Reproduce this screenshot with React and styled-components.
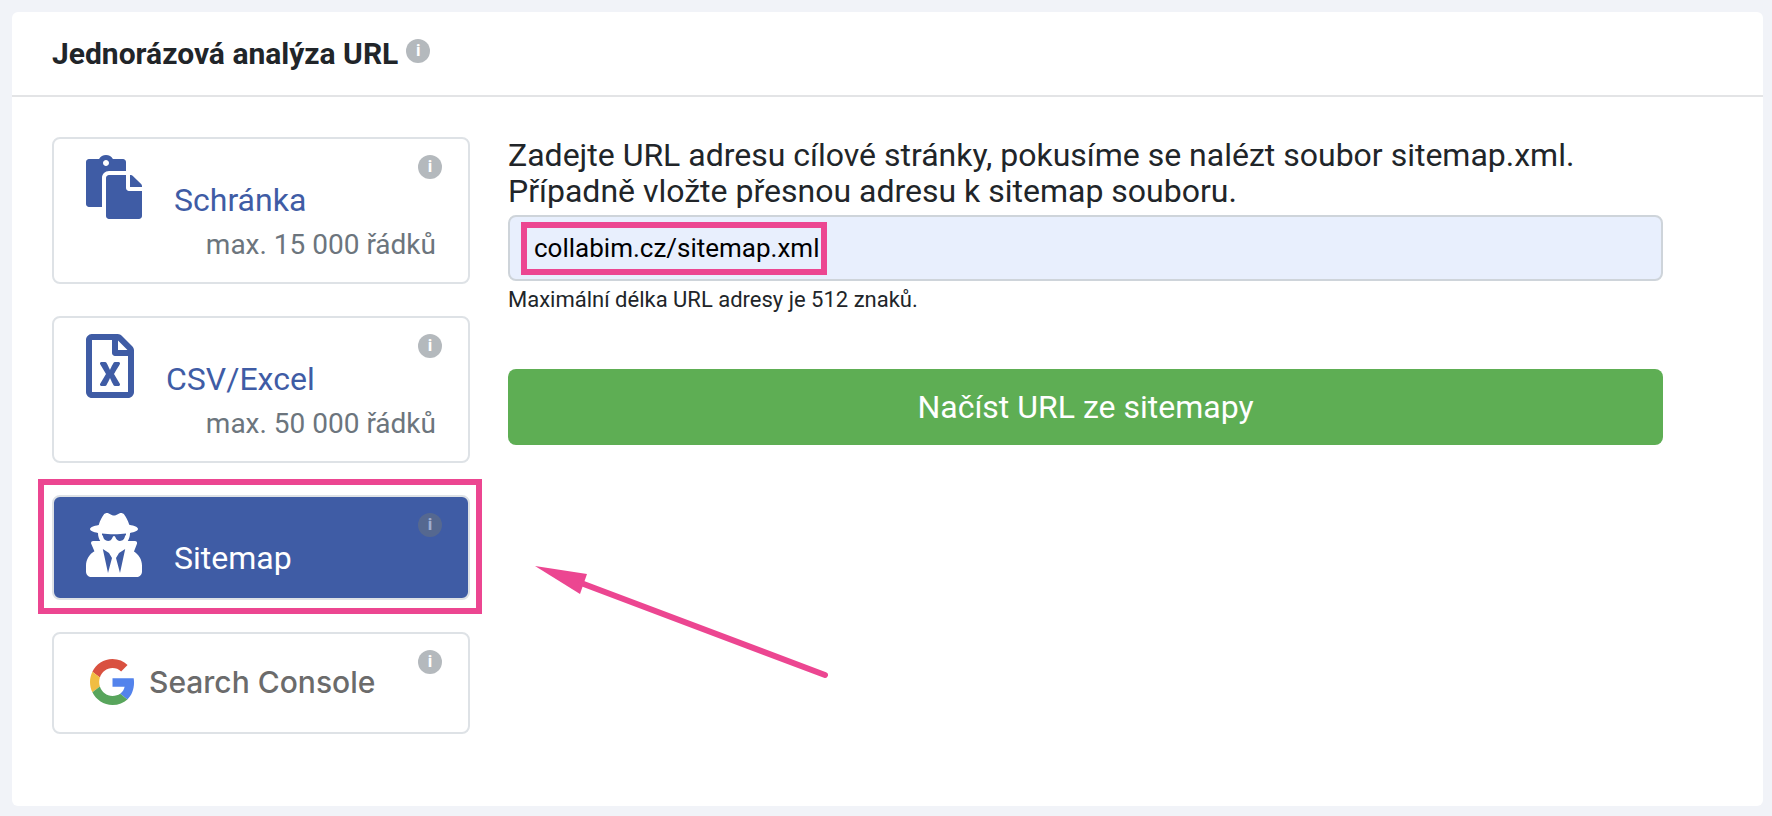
import React, { useState } from "react";
import styled, { createGlobalStyle } from "styled-components";
import { FaPaste, FaRegFileExcel, FaUserSecret } from "react-icons/fa";

const GoogleLogo = () => (
  <svg width="45" height="46" viewBox="0 0 48 48" preserveAspectRatio="none" aria-hidden="true">
    <path
      fill="#d95140"
      d="M24 9.5c3.54 0 6.71 1.22 9.21 3.6l6.85-6.85C35.9 2.38 30.47 0 24 0 14.62 0 6.51 5.38 2.56 13.22l7.98 6.19C12.43 13.72 17.74 9.5 24 9.5z"
    />
    <path
      fill="#5383ec"
      d="M46.98 24.55c0-1.57-.15-3.09-.38-4.55H24v9.02h12.94c-.58 2.96-2.26 5.48-4.78 7.18l7.73 6c4.51-4.18 7.09-10.36 7.09-17.65z"
    />
    <path
      fill="#f1bd42"
      d="M10.53 28.59c-.48-1.45-.76-2.99-.76-4.59s.27-3.14.76-4.59l-7.98-6.19C.92 16.46 0 20.12 0 24c0 3.88.92 7.54 2.56 10.78l7.97-6.19z"
    />
    <path
      fill="#58a55c"
      d="M24 48c6.48 0 11.93-2.13 15.89-5.81l-7.73-6c-2.15 1.45-4.92 2.3-8.16 2.3-6.26 0-11.57-4.22-13.47-9.91l-7.98 6.19C6.51 42.62 14.62 48 24 48z"
    />
  </svg>
);

const SourceOption = ({ icon, name, limit, active, minHeight, onClick }) => (
  <Option type="button" $active={active} $minHeight={minHeight} aria-pressed={active} onClick={onClick}>
    <OptionRow>
      {icon}
      <OptionName>{name}</OptionName>
    </OptionRow>
    {limit && <OptionLimit>{limit}</OptionLimit>}
    <CornerInfo>i</CornerInfo>
  </Option>
);

const App = () => {
  const [source, setSource] = useState("sitemap");
  const [url, setUrl] = useState("collabim.cz/sitemap.xml");

  return (
    <>
      <GlobalStyle />
      <Card>
        <CardHeader>
          <Title>Jednorázová analýza URL</Title>
          <Info>i</Info>
        </CardHeader>
        <CardBody>
          <Sources>
            <SourceOption
              icon={<PasteIcon />}
              name="Schránka"
              limit="max. 15 000 řádků"
              active={source === "clipboard"}
              onClick={() => setSource("clipboard")}
            />
            <SourceOption
              icon={<ExcelIcon />}
              name="CSV/Excel"
              limit="max. 50 000 řádků"
              active={source === "csv"}
              onClick={() => setSource("csv")}
            />
            <Marked>
              <SourceOption
                icon={<SecretIcon />}
                name="Sitemap"
                minHeight={105}
                active={source === "sitemap"}
                onClick={() => setSource("sitemap")}
              />
              <OptionFrame />
            </Marked>
            <ConsoleOption
              type="button"
              $minHeight={102}
              $active={source === "console"}
              aria-pressed={source === "console"}
              onClick={() => setSource("console")}
            >
              <GoogleLogo />
              <ConsoleName>Search Console</ConsoleName>
              <CornerInfo>i</CornerInfo>
            </ConsoleOption>
          </Sources>
          <Form onSubmit={(e) => e.preventDefault()}>
            <Label htmlFor="url">
              Zadejte URL adresu cílové stránky, pokusíme se nalézt soubor sitemap.xml.
              <br />
              Případně vložte přesnou adresu k sitemap souboru.
            </Label>
            <Marked>
              <Input
                id="url"
                type="text"
                maxLength={512}
                value={url}
                aria-describedby="url-hint"
                onChange={(e) => setUrl(e.target.value)}
              />
              <InputFrame />
            </Marked>
            <Hint id="url-hint">Maximální délka URL adresy je 512 znaků.</Hint>
            <Submit type="submit">Načíst URL ze sitemapy</Submit>
            <Arrow width="300" height="120" viewBox="0 0 300 120" aria-hidden="true">
              <path d="M0 1L52 9L45 29Z" fill="#ec4691" />
              <path d="M46 18L290 110" stroke="#ec4691" strokeWidth="6" strokeLinecap="round" />
            </Arrow>
          </Form>
        </CardBody>
      </Card>
    </>
  );
};

export default App;

const GlobalStyle = createGlobalStyle`
  * {
    box-sizing: border-box;
  }

  body {
    margin: 0;
    background-color: #f1f3f8;
    color: #212529;
    font-family: Roboto, "Liberation Sans", sans-serif;
  }

  button,
  input {
    font-family: inherit;
  }
`;

const Card = styled.main`
  min-height: calc(100vh - 22px);
  margin: 12px 9px 10px 12px;
  border-radius: 6px;
  background-color: white;
`;

const CardHeader = styled.header`
  display: flex;
  align-items: flex-start;
  gap: 8px;
  padding: 24px 40px;
  border-bottom: 2px solid #e3e4e6;
`;

const Title = styled.h1`
  margin: 0;
  font-size: 30px;
  line-height: 35px;
  font-weight: 700;
`;

const Info = styled.span`
  width: 24px;
  height: 24px;
  margin-top: 3px;
  border-radius: 50%;
  background-color: #6c757d;
  color: white;
  font-size: 17px;
  line-height: 22px;
  font-weight: 700;
  text-align: center;
  opacity: 0.5;
`;

const CornerInfo = styled(Info)`
  position: absolute;
  top: 16px;
  right: 26px;
  margin: 0;
`;

const CardBody = styled.div`
  display: flex;
  gap: 38px;
  padding: 40px 100px 40px 40px;
`;

const Sources = styled.div`
  display: flex;
  flex: 0 0 418px;
  flex-direction: column;
  gap: 32px;
`;

const Option = styled.button`
  position: relative;
  display: flex;
  flex-direction: column;
  width: 100%;
  min-height: ${({ $minHeight }) => ($minHeight ? `${$minHeight}px` : "auto")};
  padding: 16px 32px 15px;
  border: 2px solid #dee2e6;
  border-radius: 8px;
  background-color: ${({ $active }) => ($active ? "#3f5ca5" : "white")};
  color: ${({ $active }) => ($active ? "white" : "#3f5ca5")};
  cursor: pointer;

  svg {
    flex-shrink: 0;
  }
`;

const OptionRow = styled.span`
  display: flex;
  align-items: flex-end;
  gap: 32px;
`;

const PasteIcon = styled(FaPaste)`
  width: 56px;
  height: 64px;
`;

const ExcelIcon = styled(FaRegFileExcel)`
  width: 48px;
  height: 64px;
`;

const SecretIcon = styled(FaUserSecret)`
  width: 56px;
  height: 64px;
`;

const OptionName = styled.span`
  font-size: 32px;
  line-height: 38px;
`;

const OptionLimit = styled.span`
  align-self: flex-end;
  margin-top: 4px;
  color: #6c757d;
  font-size: 28px;
  line-height: 44px;
`;

const ConsoleOption = styled(Option)`
  flex-direction: row;
  align-items: center;
  gap: 14px;
  padding: 0 36px 2px;
`;

const ConsoleName = styled.span`
  color: #6b6b6b;
  font-family: Inter, sans-serif;
  font-size: 30px;
  line-height: 36px;
  font-weight: 500;
`;

const Marked = styled.div`
  position: relative;
`;

const Frame = styled.span`
  position: absolute;
  border: 6px solid #ec4691;
  pointer-events: none;
`;

const OptionFrame = styled(Frame)`
  inset: -16px -12px -14px -14px;
`;

const InputFrame = styled(Frame)`
  top: 7px;
  left: 13px;
  width: 306px;
  height: 53px;
`;

const Form = styled.form`
  position: relative;
  flex: 1;
  min-width: 0;
`;

const Label = styled.label`
  display: block;
  margin-bottom: 6px;
  font-size: 32px;
  line-height: 36px;
`;

const Input = styled.input`
  display: block;
  width: 100%;
  height: 66px;
  padding: 0 24px;
  border: 2px solid #ced4da;
  border-radius: 8px;
  background-color: #e8effd;
  color: black;
  font-size: 26px;
`;

const Hint = styled.p`
  margin: 4px 0 54px;
  font-size: 22px;
  line-height: 30px;
`;

const Submit = styled.button`
  display: block;
  width: 100%;
  height: 76px;
  border: none;
  border-radius: 8px;
  background-color: #5eae54;
  color: white;
  font-size: 32px;
  cursor: pointer;
`;

const Arrow = styled.svg`
  position: absolute;
  top: 428px;
  left: 27px;
`;
